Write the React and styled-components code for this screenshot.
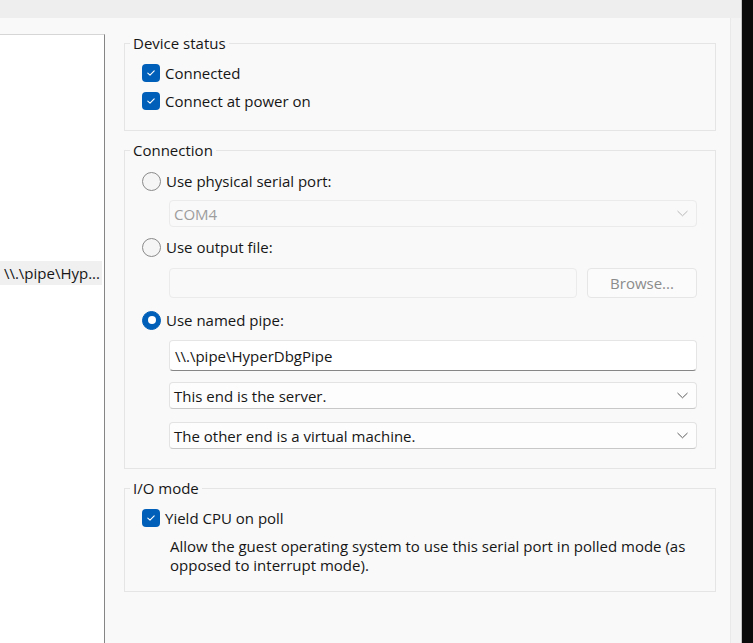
import React from "react";
import styled, { createGlobalStyle } from "styled-components";

const GlobalStyle = createGlobalStyle`
  html, body {
    margin: 0;
    padding: 0;
    background: #0b0b0b;
  }
  body {
    font-family: "Open Sans", "Noto Sans", sans-serif;
    font-size: 15px;
    color: #161616;
  }
  #root {
    height: 643px;
  }
`;

const Window = styled.div`
  box-sizing: border-box;
  width: 742px;
  height: 643px;
  display: flex;
  flex-direction: column;
  background: #f9f9f9;
  border-right: 1px solid #c4c4c4;
  overflow: hidden;
`;

const TitleStrip = styled.div`
  height: 18px;
  flex-shrink: 0;
  background: #eeeeee;
`;

const Body = styled.div`
  flex: 1;
  display: flex;
  min-height: 0;
`;

const DeviceList = styled.div`
  box-sizing: border-box;
  width: 105px;
  flex-shrink: 0;
  margin-top: 16px;
  background: #ffffff;
  border-top: 1px solid #d6d6d6;
  border-right: 1px solid #858585;
`;

const SelectedRow = styled.div`
  margin-top: 226px;
  width: 102px;
  height: 24px;
  display: flex;
  align-items: center;
  justify-content: flex-end;
  overflow: hidden;
  white-space: nowrap;
  background: #f0f0f0;
  padding-right: 2px;
  box-sizing: border-box;
`;

const Settings = styled.div`
  flex: 1;
  display: flex;
  flex-direction: column;
  gap: 9px;
  padding: 15px 14px 0 19px;
`;

const Gutter = styled.div`
  box-sizing: border-box;
  width: 11px;
  flex-shrink: 0;
  background: #f3f3f3;
  border-left: 1px solid #e9e9e9;
`;

const Group = styled.fieldset`
  margin: 0;
  padding: 0;
  min-width: 0;
  border: 1px solid #e5e5e5;
`;

const Legend = styled.legend`
  margin-left: 5px;
  padding: 0 3px;
  line-height: 20px;
  color: #161616;
`;

const GroupBody = styled.div`
  display: flex;
  flex-direction: column;
  padding: ${(p) => p.$top}px 18px ${(p) => p.$bottom}px 17px;
`;

const OptionRow = styled.label`
  height: 28px;
  display: flex;
  align-items: center;
  gap: 5px;
  margin-top: ${(p) => p.$mt || 0}px;
`;

const CheckBox = styled.span`
  width: 18px;
  height: 18px;
  border-radius: 4px;
  background: #005fb8;
  display: flex;
  align-items: center;
  justify-content: center;
  flex-shrink: 0;
`;

const Radio = styled.span`
  box-sizing: border-box;
  width: 19px;
  height: 19px;
  border-radius: 50%;
  flex-shrink: 0;
  display: flex;
  align-items: center;
  justify-content: center;
  background: ${(p) => (p.$on ? "#005fb8" : "#f5f5f5")};
  border: 1px solid ${(p) => (p.$on ? "#005fb8" : "#8a8a8a")};

  &::after {
    content: "";
    width: 8px;
    height: 8px;
    border-radius: 50%;
    background: #ffffff;
    display: ${(p) => (p.$on ? "block" : "none")};
  }
`;

const Indented = styled.div`
  margin-left: 27px;
  margin-top: ${(p) => p.$mt || 0}px;
  display: flex;
  gap: 10px;
`;

const Select = styled.div`
  box-sizing: border-box;
  flex: 1;
  height: 27px;
  display: flex;
  align-items: center;
  justify-content: space-between;
  padding: 0 8px 0 4px;
  border-radius: 4px;
  border: 1px solid ${(p) => (p.$disabled ? "#ebebeb" : "#e3e3e3")};
  border-bottom-color: ${(p) => (p.$disabled ? "#ebebeb" : "#c8c8c8")};
  background: ${(p) => (p.$disabled ? "#f9f9f9" : "#fdfdfd")};
  color: ${(p) => (p.$disabled ? "#9d9d9d" : "#161616")};
`;

const TextField = styled.div`
  box-sizing: border-box;
  flex: 1;
  height: ${(p) => p.$h}px;
  display: flex;
  align-items: center;
  padding: 0 5px;
  border-radius: 4px;
  border: 1px solid ${(p) => (p.$disabled ? "#ebebeb" : "#e5e5e5")};
  border-bottom-color: ${(p) => (p.$disabled ? "#ebebeb" : "#868686")};
  background: ${(p) => (p.$disabled ? "#f9f9f9" : "#ffffff")};
`;

const Button = styled.div`
  box-sizing: border-box;
  width: 110px;
  height: 30px;
  display: flex;
  align-items: center;
  justify-content: center;
  border-radius: 4px;
  border: 1px solid #e6e6e6;
  background: #fbfbfb;
  color: #8b8b8b;
`;

const Note = styled.div`
  margin: 5px 0 0 28px;
  padding-right: 2px;
  line-height: 19px;
`;

const Check = () => (
  <CheckBox>
    <svg width="12" height="12" viewBox="0 0 12 12">
      <path d="M2.8 6.2 L5 8.2 L9.2 3.8" fill="none" stroke="#ffffff" strokeWidth="1.1" strokeLinecap="round" strokeLinejoin="round" />
    </svg>
  </CheckBox>
);

const Chevron = ({ faint }) => (
  <svg width="11" height="7" viewBox="0 0 11 7">
    <path d="M0.5 1 L5.5 5.8 L10.5 1" fill="none" stroke={faint ? "#b8b8b8" : "#5c5c5c"} strokeWidth="1" />
  </svg>
);

export default function App() {
  return (
    <>
      <GlobalStyle />
      <Window>
        <TitleStrip />
        <Body>
          <DeviceList>
            <SelectedRow>\\.\pipe\Hyp...</SelectedRow>
          </DeviceList>

          <Settings>
            <Group>
              <Legend>Device status</Legend>
              <GroupBody $top={6} $bottom={15}>
                <OptionRow>
                  <Check />
                  Connected
                </OptionRow>
                <OptionRow>
                  <Check />
                  Connect at power on
                </OptionRow>
              </GroupBody>
            </Group>

            <Group>
              <Legend>Connection</Legend>
              <GroupBody $top={7} $bottom={19}>
                <OptionRow>
                  <Radio />
                  Use physical serial port:
                </OptionRow>
                <Indented $mt={5}>
                  <Select $disabled>
                    COM4
                    <Chevron faint />
                  </Select>
                </Indented>
                <OptionRow $mt={6}>
                  <Radio />
                  Use output file:
                </OptionRow>
                <Indented $mt={7}>
                  <TextField $h={30} $disabled />
                  <Button>Browse...</Button>
                </Indented>
                <OptionRow $mt={8}>
                  <Radio $on />
                  Use named pipe:
                </OptionRow>
                <Indented $mt={6}>
                  <TextField $h={31}>\\.\pipe\HyperDbgPipe</TextField>
                </Indented>
                <Indented $mt={11}>
                  <Select>
                    This end is the server.
                    <Chevron />
                  </Select>
                </Indented>
                <Indented $mt={13}>
                  <Select>
                    The other end is a virtual machine.
                    <Chevron />
                  </Select>
                </Indented>
              </GroupBody>
            </Group>

            <Group>
              <Legend>I/O mode</Legend>
              <GroupBody $top={6} $bottom={16}>
                <OptionRow>
                  <Check />
                  Yield CPU on poll
                </OptionRow>
                <Note>
                  Allow the guest operating system to use this serial port in polled mode (as opposed to interrupt mode).
                </Note>
              </GroupBody>
            </Group>
          </Settings>

          <Gutter />
        </Body>
      </Window>
    </>
  );
}
